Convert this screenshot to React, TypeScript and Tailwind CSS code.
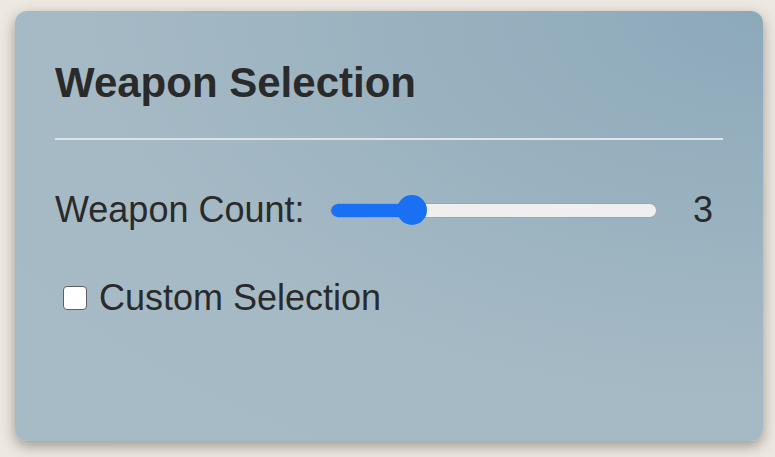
import React, { useState } from 'react';

const WeaponSlider: React.FC<{ value: number; min: number; max: number }> = ({ value, min, max }) => {
  const pct = (value - min) / (max - min);
  return (
    <div className="relative h-[30px] flex-1 flex items-center">
      <div className="relative h-[15px] w-full rounded-full bg-[#efefef] border border-[#a3a3a3] overflow-hidden">
        <div
          className="absolute left-0 top-0 h-full bg-[#1a70f3]"
          style={{ width: `calc(15px + ${pct} * (100% - 30px))` }}
        />
      </div>
      <div
        className="absolute top-0 h-[30px] w-[30px] rounded-full bg-[#1a70f3]"
        style={{ left: `calc(1px + ${pct} * (100% - 30px))` }}
      />
    </div>
  );
};

export default function App() {
  const [custom, setCustom] = useState(false);
  const count = 3;

  return (
    <div className="w-[775px] h-[457px] bg-[#ede9e2] pt-[11px] pl-[15px] font-['Liberation_Sans',Arial,sans-serif] text-[#2a2a2a]">
      <div className="w-[748px] h-[430px] rounded-xl bg-[radial-gradient(ellipse_at_100%_0%,#8ca9ba_0%,#a6bac5_65%,#a7bbc5_100%)] shadow-[0_5px_14px_rgba(60,50,40,0.45)] px-10 pt-12">
        <h2 className="text-[42px] leading-[48px] font-bold">Weapon Selection</h2>
        <div className="mt-[31px] h-[2px] bg-[#dde3e6]" />

        <div className="mt-[50px] flex items-center h-10">
          <span className="text-[36px] leading-10">Weapon Count:</span>
          <div className="ml-[25px] mr-[26px] flex flex-1">
            <WeaponSlider value={count} min={1} max={10} />
          </div>
          <span className="w-10 text-center text-[36px] leading-10">{count}</span>
        </div>

        <label className="mt-[48px] flex items-center h-10 pl-2">
          <input
            type="checkbox"
            checked={custom}
            onChange={(e) => setCustom(e.target.checked)}
            className="appearance-none w-6 h-6 rounded-[4px] bg-white border-[1.5px] border-[#5f5f5f]"
          />
          <span className="ml-3 text-[36px] leading-10">Custom Selection</span>
        </label>
      </div>
    </div>
  );
}
